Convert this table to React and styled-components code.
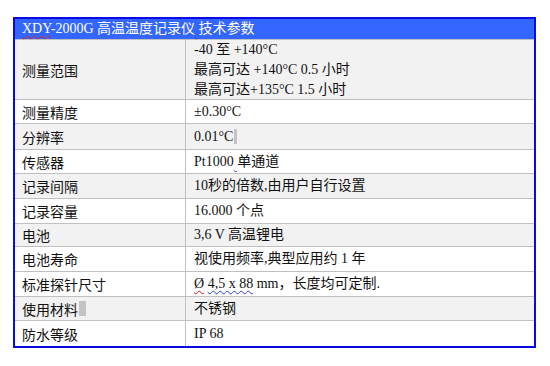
import React from "react";
import styled, { createGlobalStyle } from "styled-components";

const Global = createGlobalStyle`
  html, body { margin: 0; padding: 0; background: #ffffff; }
  body { font-family: "Liberation Serif", "Noto Sans CJK SC", serif; }
`;

const Page = styled.div`
  padding: 17px 0 0 13px;
`;

const Table = styled.div`
  width: 519px;
  border: 2px solid #0a0ae6;
  display: flex;
  flex-direction: column;
  font-family: "Liberation Serif", "Noto Sans CJK SC", serif;
  font-size: 14px;
  color: #111;
`;

const Header = styled.div`
  height: 20px;
  line-height: 20px;
  background: #3366ff;
  color: #ffffff;
  padding-left: 7px;
  border-bottom: 1px solid #c0c0c0;
  white-space: pre;
`;

const Row = styled.div`
  display: grid;
  grid-template-columns: 171px 1fr;
  height: ${(p) => p.$h}px;
  box-sizing: border-box;
  background: ${(p) => (p.$shade ? "#f2f2f2" : "#ffffff")};
  border-bottom: ${(p) => (p.$last ? "none" : "1px solid #c0c0c0")};
`;

const Label = styled.div`
  border-right: 1px solid #c0c0c0;
  display: flex;
  align-items: center;
  padding-left: 7px;
  font-family: "Noto Sans CJK SC", sans-serif;
  font-size: 14px;
  white-space: pre;
`;

const Value = styled.div`
  display: flex;
  flex-direction: column;
  justify-content: center;
  padding-left: 8px;
`;

const Line = styled.div`
  line-height: 20px;
  height: 20px;
  white-space: pre;
`;

const Wavy = styled.span`
  text-decoration: underline wavy ${(p) => p.$c};
  text-decoration-thickness: 1px;
  text-underline-offset: 2px;
`;

const Caret = styled.span`
  display: inline-block;
  width: ${(p) => p.$w}px;
  height: 15px;
  background: #c4c4c4;
  margin-left: 1px;
  vertical-align: -3px;
`;

const rows = [
  {
    label: "测量范围",
    h: 60,
    shade: true,
    value: [
      "-40 至 +140°C",
      "最高可达 +140°C 0.5 小时",
      "最高可达+135°C 1.5 小时",
    ],
  },
  { label: "测量精度", h: 24, value: ["±0.30°C"] },
  {
    label: "分辨率",
    h: 26,
    shade: true,
    value: [
      <>
        0.01°C
        <Caret $w={3} />
      </>,
    ],
  },
  {
    label: "传感器",
    h: 24,
    value: [
      <>
        Pt1000<Wavy $c="#2b3fd8">{" "}</Wavy>单通道
      </>,
    ],
  },
  { label: "记录间隔", h: 25, shade: true, value: ["10秒的倍数,由用户自行设置"] },
  { label: "记录容量", h: 25, value: ["16.000 个点"] },
  { label: "电池", h: 23, shade: true, value: ["3,6 V 高温锂电"] },
  { label: "电池寿命", h: 25, value: ["视使用频率,典型应用约 1 年"] },
  {
    label: "标准探针尺寸",
    h: 25,
    value: [
      <>
        <Wavy $c="#e02020">Ø</Wavy>{" "}<Wavy $c="#2b3fd8">4,5 x 88</Wavy>{" mm，长度均可定制."}
      </>,
    ],
  },
  {
    label: (
      <>
        使用材料
        <Caret $w={7} />
      </>
    ),
    h: 24,
    shade: true,
    value: ["不锈钢"],
  },
  { label: "防水等级", h: 25, last: true, value: ["IP 68"] },
];

export default function App() {
  return (
    <Page>
      <Global />
      <Table>
        <Header>
          <Wavy $c="#e02020">XDY</Wavy>-2000G 高温温度记录仪<Wavy $c="#2b3fd8">{" "}</Wavy>技术参数
        </Header>
        {rows.map((r, i) => (
          <Row key={i} $h={r.h} $shade={r.shade} $last={r.last}>
            <Label>{r.label}</Label>
            <Value>
              {r.value.map((v, j) => (
                <Line key={j}>{v}</Line>
              ))}
            </Value>
          </Row>
        ))}
      </Table>
    </Page>
  );
}
